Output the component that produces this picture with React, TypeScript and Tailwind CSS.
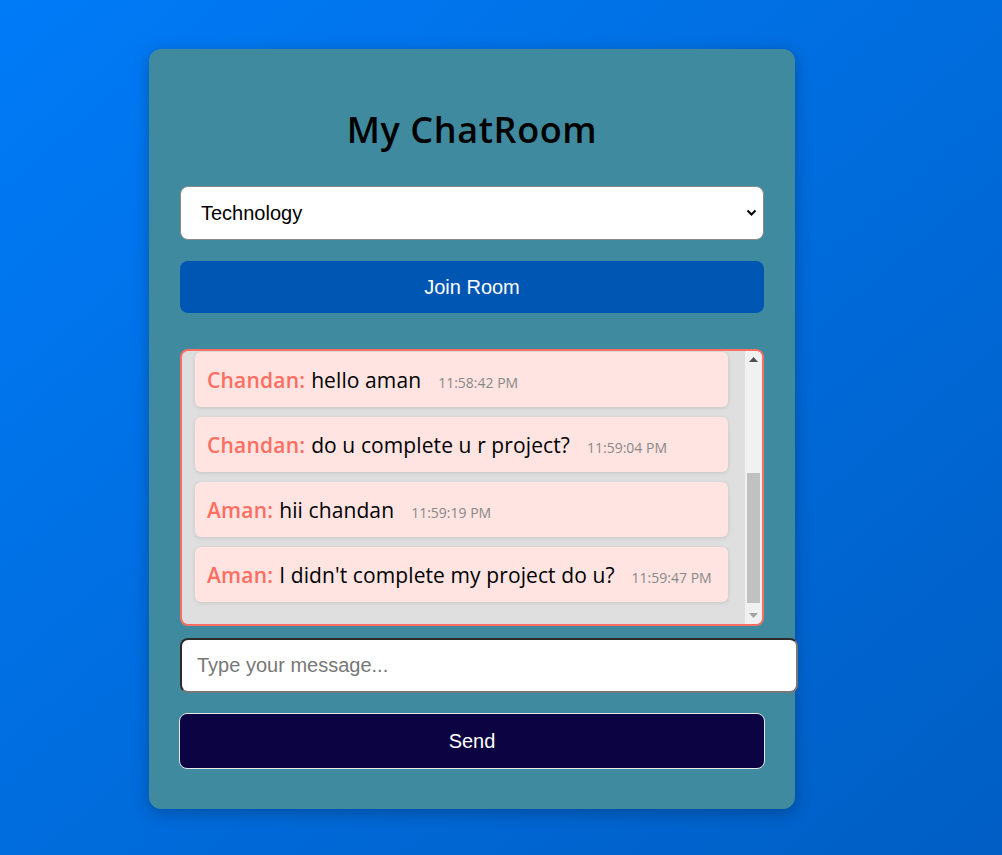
import { useEffect, useRef } from "react";

const messages = [
  { user: "Aman", text: "hii", time: "11:57:30 PM" },
  { user: "Chandan", text: "hello", time: "11:57:52 PM" },
  { user: "Aman", text: "how are you?", time: "11:58:10 PM" },
  { user: "Chandan", text: "hello aman", time: "11:58:42 PM" },
  { user: "Chandan", text: "do u complete u r project?", time: "11:59:04 PM" },
  { user: "Aman", text: "hii chandan", time: "11:59:19 PM" },
  { user: "Aman", text: "I didn't complete my project do u?", time: "11:59:47 PM" },
];

export default function App() {
  const boxRef = useRef<HTMLDivElement>(null);

  useEffect(() => {
    if (boxRef.current) boxRef.current.scrollTop = boxRef.current.scrollHeight;
  }, []);

  return (
    <div className="min-h-screen bg-gradient-to-br from-[#007bf7] to-[#005ec4] pl-[149px] pt-[49px] pb-[46px] font-['Liberation_Sans',Arial,sans-serif]">
      <div className="w-[646px] rounded-xl bg-[#3f8a9e] px-[31px] pt-[56px] pb-[40px] shadow-[0_4px_16px_rgba(0,0,0,0.25)]">
        <h1 className="text-center font-['Open_Sans',sans-serif] text-[36px] font-semibold leading-[50px] tracking-[0.6px] text-black">
          My ChatRoom
        </h1>

        <div className="relative mt-[31px]">
          <select className="h-[54px] w-full appearance-none rounded-lg border border-[#8a8a8a] bg-white pl-[20px] text-[20px] text-black outline-none">
            <option>Technology</option>
            <option>Sports</option>
            <option>Movies</option>
          </select>
          <svg
            className="pointer-events-none absolute right-[7px] top-[22px]"
            width="11"
            height="9"
            viewBox="0 0 11 9"
          >
            <path d="M1.5 2.5 L5.5 6.5 L9.5 2.5" fill="none" stroke="#000" strokeWidth="2" />
          </svg>
        </div>

        <button className="mt-[21px] h-[52px] w-full rounded-lg bg-[#0056b3] text-[20px] text-white">
          Join Room
        </button>

        <div className="mt-[36px] flex h-[277px] overflow-hidden rounded-lg border-2 border-[#fa6e63] bg-[#dfdfdf]">
          <div ref={boxRef} className="flex-1 overflow-y-auto pt-[13px] pb-[12px] pl-[13px] pr-[17px]">
            {messages.map((m, i) => (
              <div
                key={i}
                className="mb-[10px] flex h-[55px] items-center rounded-md bg-[#ffe4e1] px-[12px] shadow-[0_1px_4px_rgba(0,0,0,0.12)] font-['Open_Sans',sans-serif]"
              >
                <div className="flex items-baseline whitespace-nowrap pt-[3px] leading-[28px]">
                  <span className="text-[21px] font-semibold tracking-[0.2px] text-[#ff6f61]">{m.user}:</span>
                  <span className="ml-[6px] text-[21px] tracking-[0.1px] text-black">{m.text}</span>
                  <span className="ml-[17px] text-[14px] text-[#888]">{m.time}</span>
                </div>
              </div>
            ))}
          </div>

          {/* scrollbar */}
          <div className="flex w-[17px] flex-col bg-[#f1f1f1]">
            <div className="flex h-[17px] items-center justify-center">
              <svg width="9" height="5" viewBox="0 0 9 5">
                <path d="M0 5 L4.5 0 L9 5 Z" fill="#505050" />
              </svg>
            </div>
            <div className="flex-1">
              <div className="mx-[2px] mt-[105px] h-[130px] bg-[#c1c1c1]" />
            </div>
            <div className="flex h-[17px] items-center justify-center">
              <svg width="9" height="5" viewBox="0 0 9 5">
                <path d="M0 0 L4.5 5 L9 0 Z" fill="#a3a3a3" />
              </svg>
            </div>
          </div>
        </div>

        <input
          className="mt-[12px] box-content h-[51px] w-full rounded-lg border-2 border-t-[#2b2b2b] border-l-[#2b2b2b] border-b-[#777] border-r-[#777] bg-white px-[15px] text-[20px] text-black outline-none placeholder:text-[#777]"
          placeholder="Type your message..."
        />

        <button className="-ml-px mt-[20px] h-[56px] w-[586px] rounded-lg border border-[#e8e8e8] bg-[#0c0342] text-[20px] text-white">
          Send
        </button>
      </div>
    </div>
  );
}
